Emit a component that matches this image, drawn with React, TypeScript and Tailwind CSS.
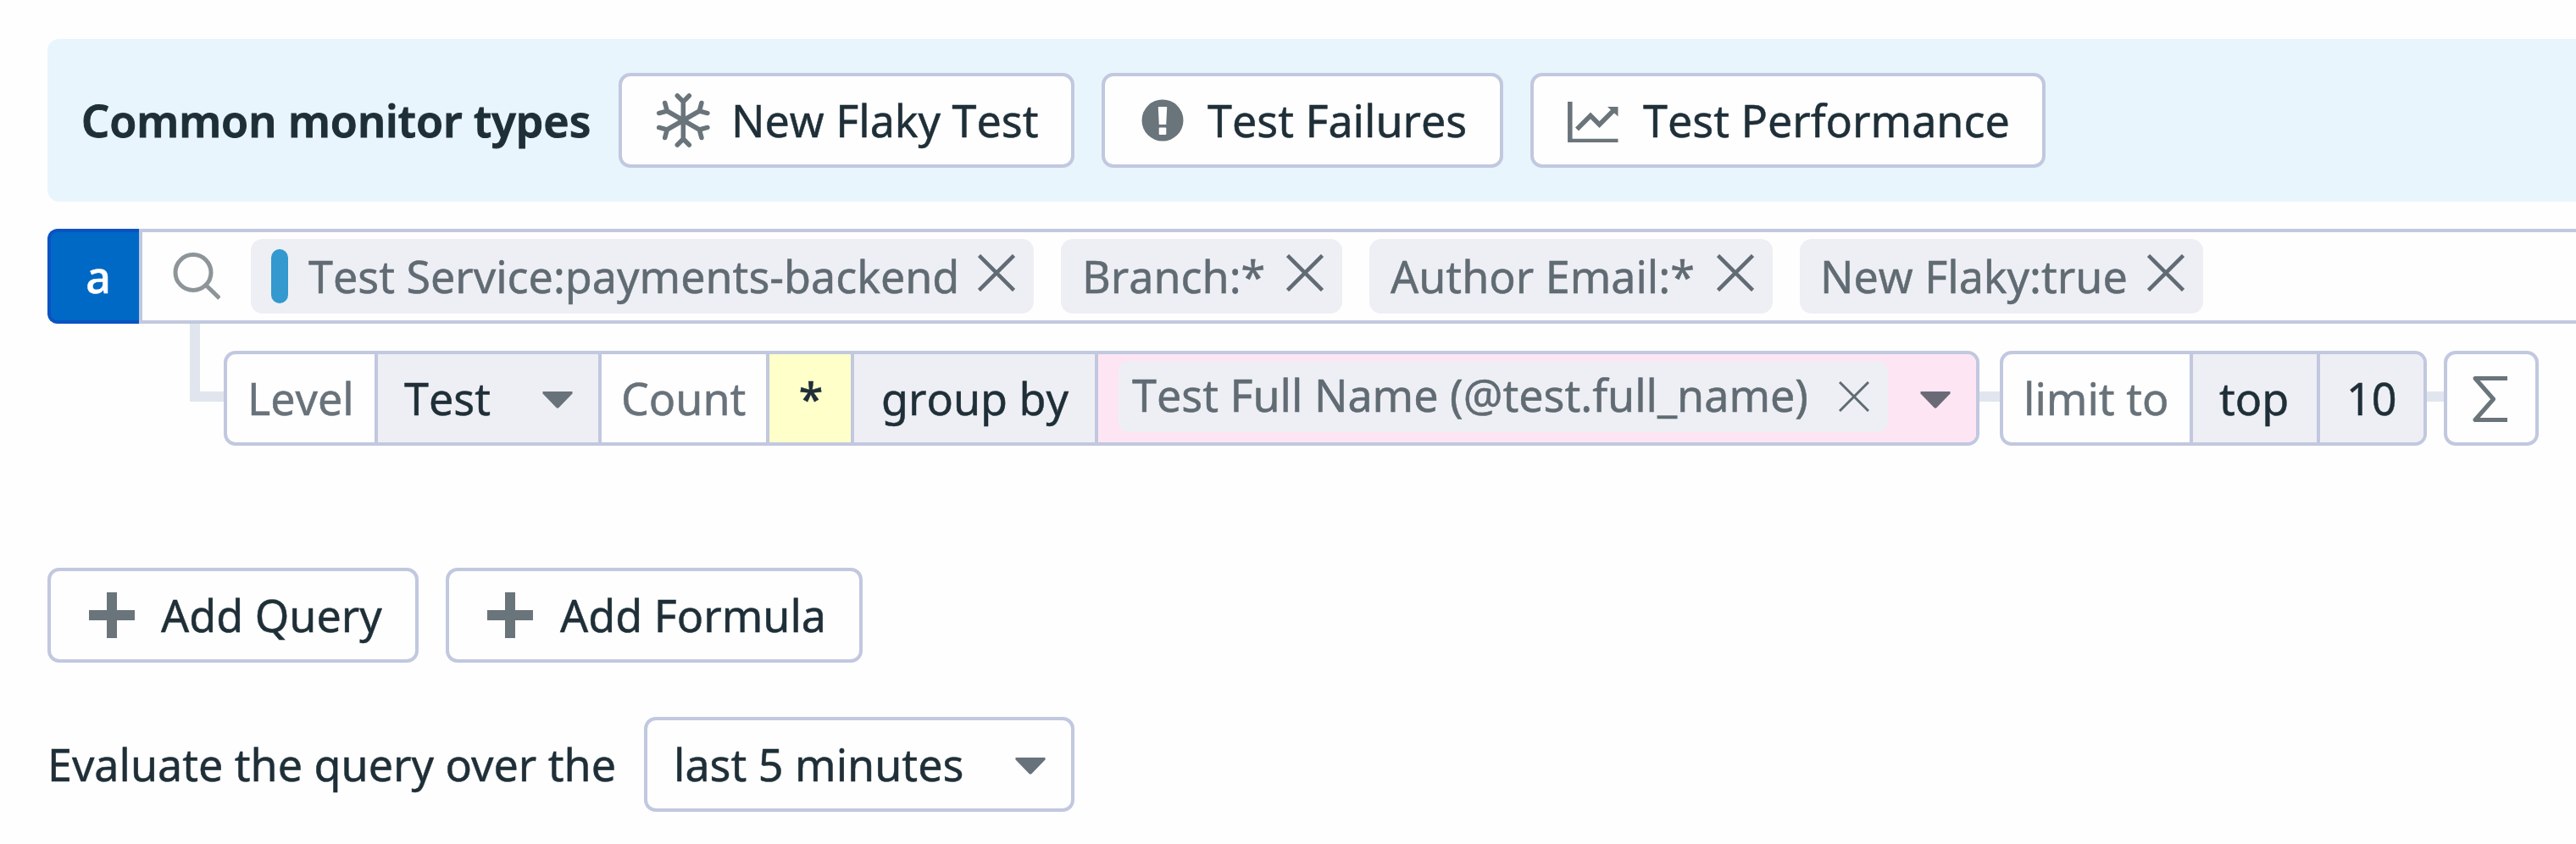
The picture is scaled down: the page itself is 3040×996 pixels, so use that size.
import React from "react";

const btn =
  "box-border flex h-[112px] shrink-0 items-center rounded-[14px] border-4 border-[#c1c8df] bg-[#fefefe]";

function Txt({ children, w, className = "" }: { children: React.ReactNode; w?: string; className?: string }) {
  return <span className={`block shrink-0 whitespace-pre ${w ?? ""} ${className}`}>{children}</span>;
}

function Snowflake() {
  return (
    <svg viewBox="0 0 64 66" className="h-[66px] w-[64px] shrink-0" fill="none" stroke="#6a747b" strokeWidth="5.5" strokeLinecap="round">
      <circle cx="32.300" cy="33" r="6" fill="#6a747b" stroke="none" />
      {[0, 60, 120, 180, 240, 300].map((a) => (
        <path key={a} d="M32.300 33V11M25.300 4L32.300 11L39.300 4" transform={`rotate(${a} 32.3 33)`} />
      ))}
    </svg>
  );
}

function Alert() {
  return (
    <svg viewBox="0 0 50 50" className="h-[50px] w-[50px] shrink-0">
      <circle cx="25" cy="25" r="24.500" fill="#6a747b" />
      <path d="M20.500 9H29.500Q30.300 9 30.200 10L29.200 30H20.800L19.800 10Q19.700 9 20.500 9Z" fill="#fefefe" />
      <rect x="20.700" y="33.500" width="8.600" height="8.500" rx="1" fill="#fefefe" />
    </svg>
  );
}

function Chart() {
  return (
    <svg viewBox="0 0 60 52" className="h-[52px] w-[60px] shrink-0" fill="none" stroke="#6a747b" strokeWidth="5.500">
      <path d="M2.800 4V50.500H59.500" />
      <path d="M11 36.500L27 20.500L37.500 31L55 13.500" />
      <path d="M47 10H59.500V21.500Z" fill="#6a747b" stroke="none" />
    </svg>
  );
}

function Search() {
  return (
    <svg viewBox="0 0 56 56" className="h-[56px] w-[56px] shrink-0" fill="none" stroke="#8d9598" strokeWidth="5">
      <circle cx="24" cy="23.500" r="21" />
      <path d="M39 38.500L55 54" />
    </svg>
  );
}

function Cross() {
  return (
    <svg viewBox="0 0 44 44" className="mb-[8px] h-[44px] w-[44px] shrink-0" stroke="#606b73" strokeWidth="4.500">
      <path d="M1.500 1.500L42.500 42.500M42.500 1.500L1.500 42.500" />
    </svg>
  );
}

function Caret({ className = "fill-[#68727a]" }: { className?: string }) {
  return (
    <svg viewBox="0 0 36 20" className={`mt-[4px] h-[20px] w-[36px] shrink-0 ${className}`}>
      <path d="M0.500 0H35.500V2.500L19.500 19Q18 20.500 16.500 19L0.500 2.500Z" />
    </svg>
  );
}

function Plus() {
  return (
    <svg viewBox="0 0 54 56" className="mb-[1px] h-[56px] w-[54px] shrink-0" fill="#6a747b">
      <path d="M21 1h12v21h21v12H33v21H21V34H0V22h21z" />
    </svg>
  );
}

function Sigma() {
  return (
    <svg viewBox="0 0 42 56" className="mt-[1px] h-[56px] w-[42px] shrink-0" fill="none" stroke="#6a747b" strokeWidth="5">
      <path d="M41 3.500H3L24.500 28L3 52.500H41" strokeLinejoin="round" />
    </svg>
  );
}

const chip =
  "flex h-[88px] shrink-0 items-center rounded-[14px] bg-[#eeeff4] text-[#606b73]";

export default function App() {
  return (
    <main className="h-[996px] w-[3040px] overflow-hidden bg-[#fefefe] pt-[46px] pl-[56px] font-['Noto_Sans',sans-serif] text-[52px] leading-[72px] text-[#1f2f38] [-webkit-text-stroke:0.5px_currentColor] [font-kerning:none]">
      <section className="flex h-[192px] items-center rounded-l-[14px] bg-[#e8f5fd] pl-[40px]">
        <Txt w="w-[634px]" className="font-semibold [-webkit-text-stroke:1px_currentColor]">Common monitor types</Txt>
        <button className={`${btn} w-[538px] pl-[40px]`}>
          <Snowflake />
          <Txt className="ml-[25px]">New Flaky Test</Txt>
        </button>
        <button className={`${btn} ml-[32px] w-[474px] pl-[43px]`}>
          <Alert />
          <Txt className="ml-[28px]">Test Failures</Txt>
        </button>
        <button className={`${btn} ml-[32px] w-[608px] pl-[40px]`}>
          <Chart />
          <Txt className="ml-[29px]">Test Performance</Txt>
        </button>
      </section>

      <section className="mt-[32px] flex h-[112px]">
        <div className="flex w-[108px] shrink-0 items-center justify-center rounded-l-[12px] border-4 border-r-0 border-[#0a53c1] bg-[#0069c6] pl-[8px] font-medium text-white">
          a
        </div>
        <div className="flex flex-1 items-center gap-[32px] border-y-4 border-l-4 border-[#c1c8df] pl-[36px]">
          <div className="mr-[4px] flex"><Search /></div>
          <div className={`${chip} w-[924px] pl-[24px]`}>
            <span className="h-[64px] w-[20px] shrink-0 rounded-[10px] bg-[#3399cf]" />
            <Txt w="w-[790px]" className="ml-[24px]">Test Service:payments-backend</Txt>
            <Cross />
          </div>
          <div className={`${chip} w-[332px] pl-[25px]`}>
            <Txt w="w-[241px]">Branch:*</Txt>
            <Cross />
          </div>
          <div className={`${chip} w-[476px] pl-[25px]`}>
            <Txt w="w-[385px]">Author Email:*</Txt>
            <Cross />
          </div>
          <div className={`${chip} w-[476px] pl-[24px]`}>
            <Txt w="w-[386px]">New Flaky:true</Txt>
            <Cross />
          </div>
        </div>
      </section>

      <section className="flex h-[144px] pl-[168px]">
        <div className="h-[92px] w-[40px] shrink-0 border-b-[12px] border-l-[12px] border-[#e1e5ee]" />
        <div className="mt-[32px] flex h-[112px] w-[2072px] shrink-0 divide-x-4 divide-[#c1c8df] overflow-hidden rounded-[14px] border-4 border-[#c1c8df]">
          <div className="flex w-[178px] items-center pl-[24px] text-[#68727a]"><Txt>Level</Txt></div>
          <div className="flex w-[264px] items-center bg-[#eeeff4] pl-[31px]">
            <Txt w="w-[163px]">Test</Txt>
            <Caret />
          </div>
          <div className="flex w-[198px] items-center pl-[23px] text-[#68727a]"><Txt>Count</Txt></div>
          <div className="flex w-[100px] items-center justify-center bg-[#ffffca] pl-[2px] font-medium"><Txt>*</Txt></div>
          <div className="flex w-[288px] items-center bg-[#eeeff4] pl-[32px]"><Txt>group by</Txt></div>
          <div className="flex flex-1 items-center bg-[#fde5f3] pl-[24px]">
            <div className="mb-[4px] flex h-[84px] w-[908px] shrink-0 items-center rounded-[12px] bg-[#eeeff4] pl-[16px] text-[#606b73]">
              <Txt w="w-[834px]" className="mb-[4px]">Test Full Name (@test.full_name)</Txt>
              <svg viewBox="0 0 36 36" className="h-[36px] w-[36px] shrink-0" stroke="#606b73" strokeWidth="3">
                <path d="M1 1L35 35M35 1L1 35" />
              </svg>
            </div>
            <div className="ml-[38px] flex"><Caret className="fill-[#6a6a77]" /></div>
          </div>
        </div>
        <div className="mt-[80px] h-[12px] w-[24px] shrink-0 bg-[#e1e5ee]" />
        <div className="mt-[32px] flex h-[112px] w-[504px] shrink-0 divide-x-4 divide-[#c1c8df] overflow-hidden rounded-[14px] border-4 border-[#c1c8df]">
          <div className="flex w-[224px] items-center pl-[24px] text-[#68727a]"><Txt>limit to</Txt></div>
          <div className="flex w-[150px] items-center bg-[#eeeff4] pl-[31px]"><Txt>top</Txt></div>
          <div className="flex flex-1 items-center bg-[#eeeff4] pl-[31px]"><Txt>10</Txt></div>
        </div>
        <div className="mt-[80px] h-[12px] w-[20px] shrink-0 bg-[#e1e5ee]" />
        <button className={`${btn} mt-[32px] w-[112px] pl-[30px]`}>
          <Sigma />
        </button>
      </section>

      <section className="mt-[144px] flex gap-[32px]">
        <button className={`${btn} w-[438px] pl-[45px]`}>
          <Plus />
          <Txt className="ml-[31px]">Add Query</Txt>
        </button>
        <button className={`${btn} w-[492px] pl-[45px]`}>
          <Plus />
          <Txt className="ml-[32px]">Add Formula</Txt>
        </button>
      </section>

      <section className="mt-[64px] flex items-center">
        <Txt w="w-[704px]" className="[font-kerning:normal]">Evaluate the query over the</Txt>
        <button className={`${btn} w-[508px] pl-[31px]`}>
          <Txt w="w-[403px]" className="text-left">last 5 minutes</Txt>
          <Caret />
        </button>
      </section>
    </main>
  );
}
